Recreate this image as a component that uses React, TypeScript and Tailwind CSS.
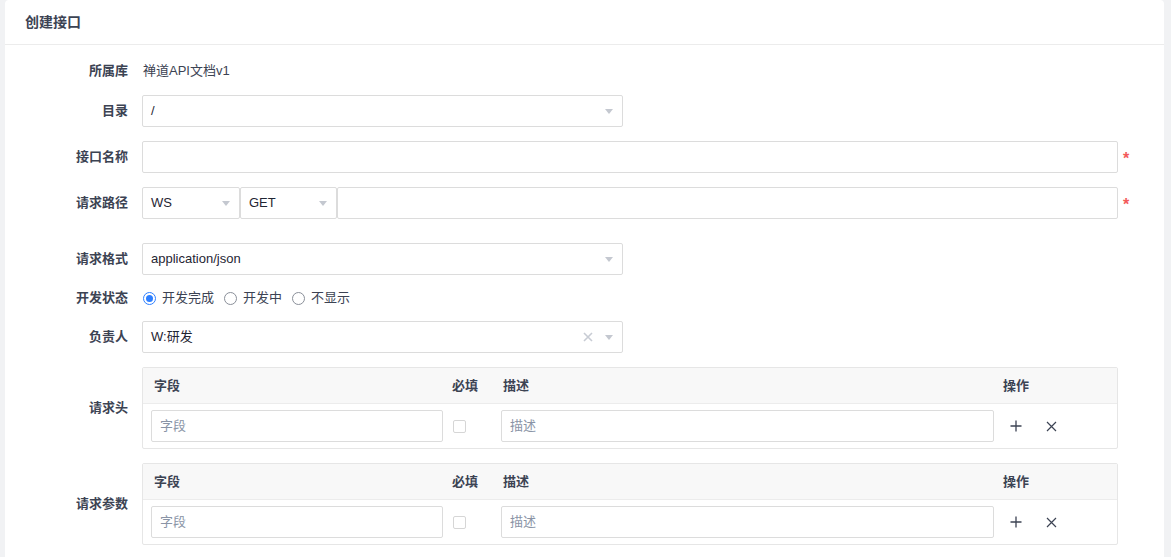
import React from 'react';

/**
 * 创建接口表单
 */

const font = { fontFamily: '"Liberation Sans", "Noto Sans CJK SC", sans-serif' };

const Arrow = () => (
  <span className="inline-block w-0 h-0 border-l-[4px] border-r-[4px] border-t-[5px] border-l-transparent border-r-transparent border-t-[#c4c8d0]" />
);

const Select = ({ value, width, clear = false }: { value: string; width: string; clear?: boolean }) => (
  <div
    className={`${width} h-[32px] flex items-center justify-between border border-[#dcdcdc] rounded-[2px] bg-white pl-[8px] pr-[9px] text-[13px] text-[#1f2533]`}
  >
    <span>{value}</span>
    <div className="flex items-center gap-[12px]">
      {clear && (
        <svg width="10" height="10" viewBox="0 0 10 10" className="text-[#c8ccd4]">
          <path d="M1 1L9 9M9 1L1 9" stroke="currentColor" strokeWidth="1.6" />
        </svg>
      )}
      <Arrow />
    </div>
  </div>
);

const Label = ({ children }: { children: React.ReactNode }) => (
  <div className="w-[123px] shrink-0 text-right text-[13px] font-semibold text-[#3c4353]">{children}</div>
);

const Star = () => (
  <span className="ml-[5px] mt-[4px] text-[#f35a5a] text-[16px] font-bold leading-none">*</span>
);

const Radio = ({ checked, label }: { checked?: boolean; label: string }) => (
  <label className="flex items-center gap-[6px] mr-[10px]">
    <span
      className={`w-[13px] h-[13px] rounded-full border flex items-center justify-center ${
        checked ? 'border-[#2e7fff]' : 'border-[#8a8f99]'
      }`}
    >
      {checked && <span className="w-[7px] h-[7px] rounded-full bg-[#2e7fff]" />}
    </span>
    <span className="text-[13px] text-[#3c4353]">{label}</span>
  </label>
);

const ParamTable = () => (
  <div className="w-[976px] border border-[#e6e6e6] rounded-[2px]">
    {/* 表头 */}
    <div className="h-[36px] bg-[#f8f8f8] flex items-center text-[13px] font-semibold text-[#3c4353] border-b border-[#ececec]">
      <div className="w-[309px] pl-[11px]">字段</div>
      <div className="w-[51px]">必填</div>
      <div className="w-[500px]">描述</div>
      <div>操作</div>
    </div>
    {/* 数据行 */}
    <div className="h-[44px] flex items-center">
      <div className="w-[309px] pl-[8px]">
        <div className="w-[292px] h-[32px] border border-[#dcdcdc] rounded-[2px] flex items-center pl-[8px] text-[13px] text-[#8a94a6]">
          字段
        </div>
      </div>
      <div className="w-[49px] pl-[1px]">
        <div className="w-[13px] h-[13px] border border-[#d6d6d6] rounded-[2px]" />
      </div>
      <div className="w-[501px]">
        <div className="w-[493px] h-[32px] border border-[#dcdcdc] rounded-[2px] flex items-center pl-[8px] text-[13px] text-[#8a94a6]">
          描述
        </div>
      </div>
      <div className="flex items-center gap-[24px] pl-[8px] text-[#3c4353]">
        <svg width="12" height="12" viewBox="0 0 12 12">
          <path d="M6 0.5V11.5M0.5 6H11.5" stroke="currentColor" strokeWidth="1.3" />
        </svg>
        <svg width="11" height="11" viewBox="0 0 11 11">
          <path d="M1 1L10 10M10 1L1 10" stroke="currentColor" strokeWidth="1.2" />
        </svg>
      </div>
    </div>
  </div>
);

export default function App() {
  return (
    <div className="w-[1171px] h-[557px] bg-[#f1f2f4] pl-[5px] pr-[7px] overflow-hidden" style={font}>
      <div className="bg-white rounded-t-[4px] h-full">
        {/* 标题 */}
        <div className="h-[45px] flex items-center pl-[20px] border-b border-[#ececec] text-[14px] font-semibold text-[#3c4353]">
          创建接口
        </div>

        <div className="flex flex-col">
          {/* 所属库 */}
          <div className="flex items-center gap-[14px] h-[32px] mt-[10px]">
            <Label>所属库</Label>
            <span className="text-[13px] text-[#3c4353] pl-[1px]">禅道API文档v1</span>
          </div>

          {/* 目录 */}
          <div className="flex items-center gap-[14px] mt-[8px]">
            <Label>目录</Label>
            <Select value="/" width="w-[481px]" />
          </div>

          {/* 接口名称 */}
          <div className="flex items-center gap-[14px] mt-[14px]">
            <Label>接口名称</Label>
            <div className="flex items-center">
              <div className="w-[976px] h-[32px] border border-[#dcdcdc] rounded-[2px]" />
              <Star />
            </div>
          </div>

          {/* 请求路径 */}
          <div className="flex items-center gap-[14px] mt-[14px]">
            <Label>请求路径</Label>
            <div className="flex items-center">
              <Select value="WS" width="w-[98px]" />
              <Select value="GET" width="w-[97px]" />
              <div className="w-[781px] h-[32px] border border-[#dcdcdc] rounded-[2px]" />
              <Star />
            </div>
          </div>

          {/* 请求格式 */}
          <div className="flex items-center gap-[14px] mt-[24px]">
            <Label>请求格式</Label>
            <Select value="application/json" width="w-[481px]" />
          </div>

          {/* 开发状态 */}
          <div className="flex items-center gap-[14px] h-[32px] mt-[7px]">
            <Label>开发状态</Label>
            <div className="flex items-center pl-[1px]">
              <Radio checked label="开发完成" />
              <Radio label="开发中" />
              <Radio label="不显示" />
            </div>
          </div>

          {/* 负责人 */}
          <div className="flex items-center gap-[14px] mt-[7px]">
            <Label>负责人</Label>
            <Select value="W:研发" width="w-[481px]" clear />
          </div>

          {/* 请求头 */}
          <div className="flex items-center gap-[14px] mt-[14px]">
            <Label>请求头</Label>
            <ParamTable />
          </div>

          {/* 请求参数 */}
          <div className="flex items-center gap-[14px] mt-[14px]">
            <Label>请求参数</Label>
            <ParamTable />
          </div>
        </div>
      </div>
    </div>
  );
}
